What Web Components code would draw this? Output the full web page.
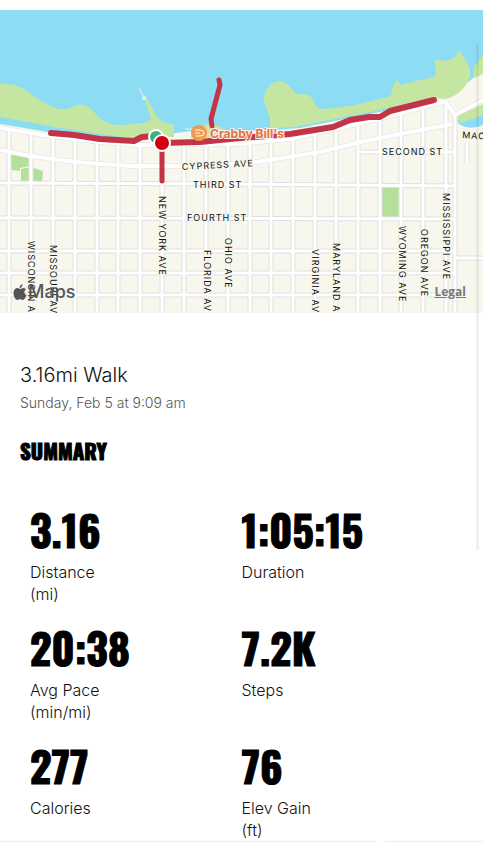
<!DOCTYPE html>
<html lang="en">
<head>
<meta charset="utf-8">
<meta name="viewport" content="width=device-width, initial-scale=1">
<title>3.16mi Walk</title>
<style>
  body {
    margin: 0;
    background: #fff;
    color: #111;
    font-family: Inter, "Liberation Sans", sans-serif;
  }
</style>
</head>
<body>
<walk-page>
  <route-map slot="map"></route-map>
  <activity-title slot="title">
    3.16mi Walk
    <span slot="date">Sunday, Feb 5 at 9:09 am</span>
  </activity-title>
  <summary-section>
    <stat-tile value="3.16" unit="(mi)">Distance</stat-tile>
    <stat-tile value="1:05:15">Duration</stat-tile>
    <stat-tile value="20:38" unit="(min/mi)">Avg Pace</stat-tile>
    <stat-tile value="7.2K">Steps</stat-tile>
    <stat-tile value="277">Calories</stat-tile>
    <stat-tile value="76" unit="(ft)">Elev Gain</stat-tile>
  </summary-section>
</walk-page>

<script>
class WalkPage extends HTMLElement {
  constructor() {
    super();
    this.attachShadow({ mode: 'open' })
    this.shadowRoot.innerHTML = `
      <style>
        :host {
          display: block;
          position: relative;
          padding-top: 10px;
        }
        main {
          padding: 48px 20px 0;
        }
        .scrollbar {
          position: absolute;
          top: 44px;
          right: 4px;
          width: 3px;
          height: 506px;
          border-radius: 2px;
          background: rgba(0, 0, 0, 0.06);
        }
        footer {
          display: flex;
          gap: 8px;
        }
        footer i {
          height: 1px;
          background: #ededed;
        }
        footer i:first-child { flex: 377; }
        footer i:last-child { flex: 98; }
      </style>
      <slot name="map"></slot>
      <main>
        <slot name="title"></slot>
        <slot></slot>
      </main>
      <footer><i></i><i></i></footer>
      <div class="scrollbar"></div>
    `
  }
}

class RouteMap extends HTMLElement {
  constructor() {
    super();
    // x of the avenues, with the y where each one meets the beach road
    this._avenues = [
      [9, 130], [31, 132], [53, 136], [75, 139], [97, 142], [118, 144],
      [140, 145], [162, 144], [184, 144], [206, 144], [228, 144], [250, 143],
      [271, 141], [293, 138], [315, 133], [336, 128], [358, 123], [380, 120],
      [401, 114], [423, 109], [446, 104]
    ]
    this.attachShadow({ mode: 'open' })
    this.shadowRoot.innerHTML = `
      <style>
        :host {
          display: block;
          position: relative;
        }
        svg {
          display: block;
          width: 100%;
          height: auto;
        }
        .roads path {
          fill: none;
        }
        .street {
          font: 9px Inter, "Liberation Sans", sans-serif;
          letter-spacing: 1px;
          fill: #111;
          stroke: #f8f7ed;
          stroke-width: 2px;
          paint-order: stroke;
        }
        .poi {
          font: 700 12px Inter, "Liberation Sans", sans-serif;
          fill: #e0714a;
          stroke: #fbf3ea;
          stroke-width: 2px;
          paint-order: stroke;
        }
        .overlay {
          position: absolute;
          right: 17px;
          bottom: 11px;
          left: 13px;
          display: flex;
          justify-content: space-between;
          align-items: center;
          color: #555;
        }
        .brand {
          display: flex;
          align-items: center;
          gap: 1px;
          font-size: 18px;
          line-height: 20px;
          font-weight: 500;
        }
        .brand svg {
          width: 14px;
          height: 16px;
        }
        a {
          color: #777;
          font: 700 12px/14px "Open Sans", sans-serif;
        }
      </style>
      <svg class="map" viewBox="0 10 483 303" role="img" aria-label="Route map">
        <rect y="10" width="483" height="303" fill="#8cdcf4"/>
        <path fill="#f8f7ed" d="M0 124 L30 129 L60 134 L100 138 L145 137 L200 130 L260 131 L300 128 L380 112 L432 98 L450 97 L462 88 L474 77 L483 73 V313 H0Z"/>
        <path fill="#c4e6a1" d="M0 84 C18 83 26 89 36 98 C50 105 58 112 70 108 C78 103 86 103 94 112 C104 125 116 127 132 124 C144 123 150 122 151 118 L144 98 L146 97 L157 117 C162 122 168 124 174 125 V137 L130 138 L100 134 L60 128 L0 117Z"/>
        <path fill="#c4e6a1" d="M269 128 C274 119 263 106 264 96 C268 84 276 78 286 83 C294 90 294 96 305 94 C316 96 312 108 322 109 C345 108 365 103 391 96 C392 88 394 83 397 80 C399 82 399 84 401 85 L420 80 L434 77 C438 71 434 66 435 59 C446 62 454 62 459 50 C465 60 472 66 470 78 C464 90 456 97 445 99 L432 98 L375 111 L295 127Z"/>
        <path fill="#c4e6a1" d="M474 67 L483 55 V74 L474 78Z"/>
        <path fill="#8cdcf4" d="M457 120 L483 105 V125 Q470 131 459 124Z"/>
        <path fill="#c4e6a1" d="M457 116 L483 104 V115 L461 123Z"/>
        <path fill="#d5e2a3" d="M192 134 L207 124 L218 126 L225 130 L232 138 H190Z"/>
        <path d="M139 88 L145 99 M185 129 H200" stroke="#e9f4ef" stroke-width="1"/>
        <circle cx="144" cy="98" r="2" fill="#e9f4ef"/>
        <g fill="#b4e09c">
          <path d="M11 154 L29 158 V166 L20 168 V171 L11 170Z"/>
          <path d="M21 169 L31 167 L43 171 L42 183 H21Z"/>
          <path d="M382 188 H400 V218 H382Z"/>
        </g>
        <g class="roads"></g>
        <g fill="none" stroke="#c43447" stroke-width="6" stroke-linecap="round" stroke-linejoin="round">
          <path d="M51 133 L74 135 L100 139 L134 141 L142 137 L155 136 L162 143 L200 142 L240 138 L290 134 L333 127 L350 120 L369 117 L380 117 L390 111 L434 100"/>
          <path stroke-width="5" d="M162 143 V181"/>
          <path stroke-width="5" d="M219 80 L220 85 L211 119 L212 126"/>
        </g>
        <circle cx="156" cy="137" r="8" fill="#fff"/>
        <circle cx="156" cy="137" r="6" fill="#3dae80"/>
        <circle cx="162" cy="143" r="9" fill="#fff"/>
        <circle cx="162" cy="143" r="7" fill="#cf0014"/>
        <circle cx="199" cy="133" r="8" fill="#f19a4b"/>
        <path d="M195 130 H200 Q204 130 204 133 Q204 136 200 136 H196 M195 133 H200" fill="none" stroke="#fff" stroke-width="1"/>
        <text class="poi" x="210" y="138">Crabby Bill's</text>
        <text class="street" transform="translate(182 170) rotate(-3)">CYPRESS AVE</text>
        <text class="street" x="193" y="188">THIRD ST</text>
        <text class="street" x="187" y="221">FOURTH ST</text>
        <text class="street" x="382" y="155">SECOND ST</text>
        <text class="street" transform="translate(462 138) rotate(4)">MAC</text>
        <text class="street" transform="translate(159 196) rotate(90)">NEW YORK AVE</text>
        <text class="street" transform="translate(28 241) rotate(90)">WISCONSIN A</text>
        <text class="street" transform="translate(50 245) rotate(90)">MISSOURI AV</text>
        <text class="street" transform="translate(204 250) rotate(90)">FLORIDA AV</text>
        <text class="street" transform="translate(225 238) rotate(90)">OHIO AVE</text>
        <text class="street" transform="translate(312 249) rotate(90)">VIRGINIA AV</text>
        <text class="street" transform="translate(333 243) rotate(90)">MARYLAND A</text>
        <text class="street" transform="translate(399 226) rotate(90)">WYOMING AVE</text>
        <text class="street" transform="translate(421 229) rotate(90)">OREGON AVE</text>
        <text class="street" transform="translate(443 193) rotate(90)">MISSISSIPPI AVE</text>
      </svg>
      <div class="overlay">
        <span class="brand">
          <svg viewBox="0 0 13 16" fill="#555"><path d="M9 0 C9 2 8 4 6 4 C6 2 7 1 9 0Z M6.500 5 C8 5 8.500 4 10 4 C11 4 12 5 12.500 5.500 C10 7 10.500 10 13 11 C12 14 10.500 16 9 16 C8 16 7.500 15.300 6.500 15.300 C5.500 15.300 5 16 4 16 C2 16 0 12.500 0 9 C0 6 1.800 4 4 4 C5 4 5.700 5 6.500 5Z"/></svg>
          Maps
        </span>
        <a href="#legal">Legal</a>
      </div>
    `
  }

  connectedCallback() {
    this._drawRoads()
  }

  // every road is drawn twice, a grey casing first and the white fill on top
  _drawRoads() {
    const avenues = this._avenues.map(([x, y]) => `M${x} ${y}V313`).join('')
    const streets = 'M0 183L228 184L455 186 M0 218L455 219 M0 251H455 M0 273H455 M0 295H455 M358 152H455 M455 115V313 M455 258H483 M467 143V163'
    const main = 'M0 128L50 136L100 142L140 145L240 144L290 139L375 120L438 103L447 101 M0 150L30 156L75 162L130 166L190 166L250 163L320 152L365 141L400 134L452 124 M445 101L455 115L483 100'
    this.shadowRoot.querySelector('.roads').innerHTML = `
      <path d="${avenues}${streets}" stroke="#e0dfe0" stroke-width="5"/>
      <path d="${main}" stroke="#e0dfe0" stroke-width="5"/>
      <path d="${avenues}${streets}" stroke="#fff" stroke-width="3"/>
      <path d="${main}" stroke="#fff" stroke-width="4"/>
    `
  }
}

class ActivityTitle extends HTMLElement {
  constructor() {
    super();
    this.attachShadow({ mode: 'open' })
    this.shadowRoot.innerHTML = `
      <style>
        :host {
          display: block;
        }
        h1 {
          margin: 0;
          font-size: 20px;
          line-height: 28px;
          font-weight: 300;
        }
        p {
          margin: 4px 0 0;
          color: #555;
          font-size: 14px;
          line-height: 20px;
          font-weight: 300;
        }
      </style>
      <h1><slot></slot></h1>
      <p><slot name="date"></slot></p>
    `
  }
}

class SummarySection extends HTMLElement {
  constructor() {
    super();
    this.attachShadow({ mode: 'open' })
    this.shadowRoot.innerHTML = `
      <style>
        :host {
          display: block;
          padding-top: 24px;
        }
        h2 {
          margin: 0;
          color: #000;
          font: 700 21px/28px Oswald, "Roboto Condensed", sans-serif;
          -webkit-text-stroke: 1px #000;
        }
        .grid {
          display: grid;
          grid-template-columns: 1fr 1fr;
          row-gap: 18px;
          padding: 40px 10px 0;
        }
      </style>
      <h2>SUMMARY</h2>
      <div class="grid"><slot></slot></div>
    `
  }
}

class StatTile extends HTMLElement {
  constructor() {
    super();
    this.attachShadow({ mode: 'open' })
    this.shadowRoot.innerHTML = `
      <style>
        :host {
          display: block;
        }
        .value {
          color: #000;
          font: 700 42px/48px Oswald, "Roboto Condensed", sans-serif;
          -webkit-text-stroke: 1px #000;
        }
        .label {
          padding-top: 8px;
          font-size: 16px;
          line-height: 22px;
          font-weight: 300;
        }
      </style>
      <div class="value"></div>
      <div class="label"><slot></slot><div class="unit"></div></div>
    `
  }

  connectedCallback() {
    this.shadowRoot.querySelector('.value').textContent = this.getAttribute('value')
    this.shadowRoot.querySelector('.unit').textContent = this.getAttribute('unit') || ''
  }
}

customElements.define('walk-page', WalkPage)
customElements.define('route-map', RouteMap)
customElements.define('activity-title', ActivityTitle)
customElements.define('summary-section', SummarySection)
customElements.define('stat-tile', StatTile)
</script>
</body>
</html>
